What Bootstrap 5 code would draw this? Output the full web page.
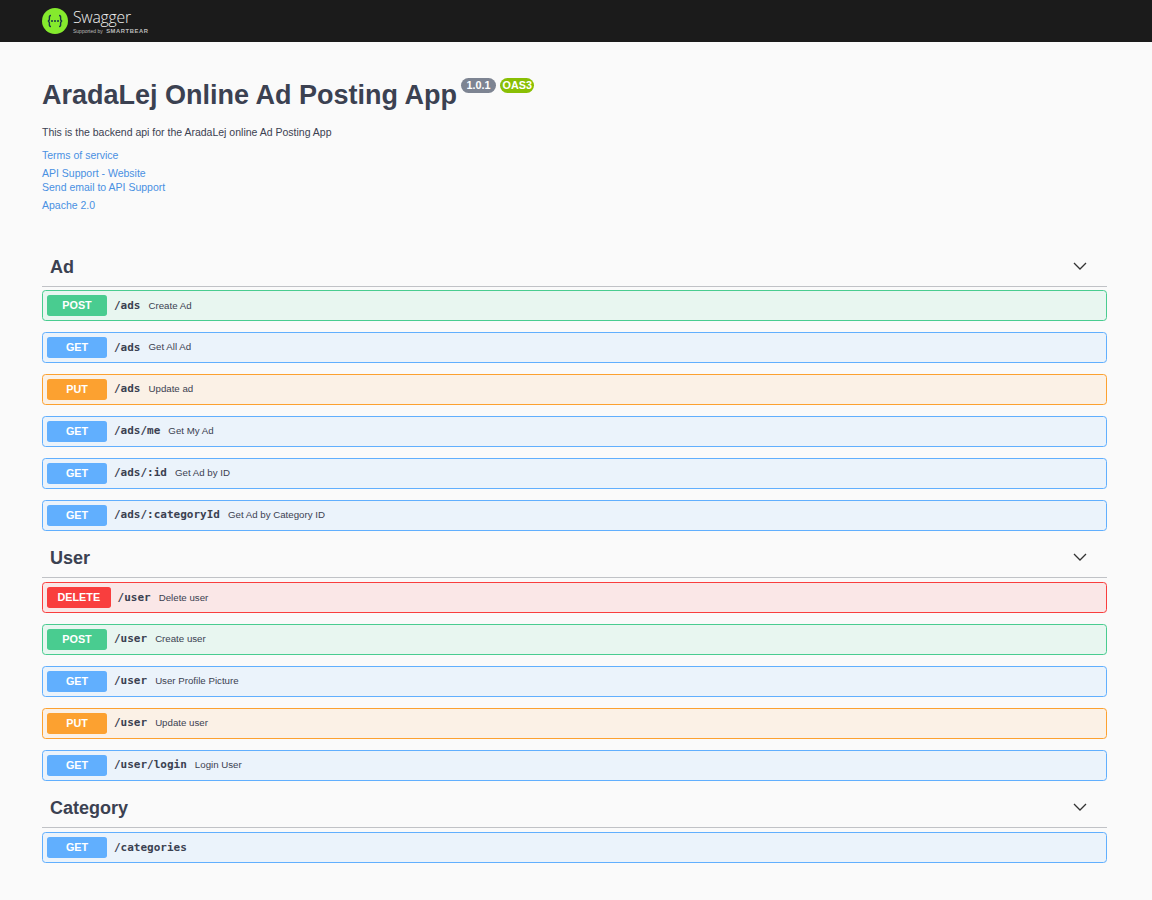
<!DOCTYPE html>
<html lang="en">
<head>
    <meta charset="UTF-8">
    <meta name="viewport" content="width=device-width, initial-scale=1.0">
    <title>Swagger UI</title>
    <link href="https://cdn.jsdelivr.net/npm/bootstrap@5.3.0/dist/css/bootstrap.min.css" rel="stylesheet">
    <style>
        body { background: #fafafa; font-family: "Liberation Sans", Arial, sans-serif; color: #3b4151; }
        .top-strip { background: #1b1b1b; height: 42px; padding: 0 42px; }
        .brand-wrap { margin-left: 5px; }
        .brand-name { font-family: "Open Sans", sans-serif; font-size: 15.7px; font-weight: 300; line-height: 18px; margin-bottom: 2px; color: #f0f0f0; letter-spacing: -.2px; }
        .brand-sub { font-size: 5px; line-height: 7px; color: #bbb; white-space: nowrap; }
        .brand-sub b { font-size: 5.8px; letter-spacing: .6px; margin-left: 2px; }
        .page-wrap { padding: 0 45px 0 42px; }
        .api-info { padding-top: 37px; height: 203.9px; }
        .api-title { font-size: 27px; line-height: 33px; font-weight: 700; margin: 0; }
        .ver-badge { font-size: 10.8px; line-height: 13px; font-weight: 700; padding: 1px 5.5px; border-radius: 8px; color: #fff; margin-top: -1px; }
        .ver-grey { background: #7d8492; }
        .ver-green { background: #89bf04; padding: 1px 2.5px; }
        .api-desc { font-size: 10.5px; line-height: 14px; margin: 0; padding-top: 13px; color: #3b4151; }
        .api-links { font-size: 10.5px; line-height: 14px; padding-top: 1px; }
        .api-links a { color: #4990e2; text-decoration: none; display: block; }
        .tag-head { height: 41px; border-bottom: 1px solid rgba(59, 65, 81, .3); padding: 0 20px 0 8px; margin-bottom: 4.5px; }
        .tag-head h3 { font-size: 18px; line-height: 22px; font-weight: 700; margin: 2px 0 0; color: #3b4151; }
        .api-info + .op-group .tag-head { margin-bottom: 3.5px; }
        .op-row { height: 31.05px; border: 1px solid; border-radius: 3.6px; padding: 0 4px; }
        .op-row + .op-row { margin-top: 10.8px; }
        .op-method { min-width: 60px; height: 21px; padding: 0 10.5px; font-size: 10.8px; line-height: 21px; font-weight: 700; color: #fff; border-radius: 2.7px; text-align: center; }
        .op-path { font-family: "DejaVu Sans Mono", monospace; font-size: 11px; font-weight: 700; padding-left: 7px; padding-right: 8px; color: #3b4151; }
        .op-summary { font-size: 9.7px; color: #3b4151; }
        .op-post { background: #e8f6f0; border-color: #49cc90; }
        .op-post .op-method { background: #49cc90; }
        .op-get { background: #ebf3fb; border-color: #61affe; }
        .op-get .op-method { background: #61affe; }
        .op-put { background: #fbf1e6; border-color: #fca130; }
        .op-put .op-method { background: #fca130; }
        .op-delete { background: #fae7e7; border-color: #f93e3e; }
        .op-delete .op-method { background: #f93e3e; }
        .op-group { margin-bottom: 6.1px; }
    </style>
</head>
<body>
    <div class="top-strip d-flex align-items-center">
        <svg width="26" height="26" viewBox="0 0 26 26">
            <circle cx="13" cy="13" r="13" fill="#85ea2d"/>
            <path d="M9 7.5c-2 0-1.6 1.6-1.6 3.2 0 1.4-.6 2.3-1.6 2.3 1 0 1.6.9 1.6 2.3 0 1.6-.4 3.2 1.6 3.2M17 7.5c2 0 1.6 1.6 1.6 3.2 0 1.4.6 2.3 1.6 2.3-1 0-1.6.9-1.6 2.3 0 1.6.4 3.2-1.6 3.2" fill="none" stroke="#173647" stroke-width="1.4"/>
            <circle cx="10" cy="13" r="1" fill="#173647"/><circle cx="13" cy="13" r="1" fill="#173647"/><circle cx="16" cy="13" r="1" fill="#173647"/>
        </svg>
        <div class="brand-wrap">
            <div class="brand-name">Swagger</div>
            <div class="brand-sub">Supported by <b>SMARTBEAR</b></div>
        </div>
    </div>
    <div class="page-wrap">
        <div class="api-info">
            <div class="d-flex align-items-start gap-1">
                <h2 class="api-title">AradaLej Online Ad Posting App</h2>
                <span class="ver-badge ver-grey">1.0.1</span>
                <span class="ver-badge ver-green">OAS3</span>
            </div>
            <p class="api-desc">This is the backend api for the AradaLej online Ad Posting App</p>
            <div class="api-links">
                <a href="#" class="mt-2">Terms of service</a>
                <a href="#" class="mt-1">API Support - Website</a>
                <a href="#">Send email to API Support</a>
                <a href="#" class="mt-1">Apache 2.0</a>
            </div>
        </div>

        <div class="op-group">
            <div class="tag-head d-flex justify-content-between align-items-center">
                <h3>Ad</h3>
                <svg width="14" height="8" viewBox="0 0 14 8"><path d="M1 1l6 6 6-6" fill="none" stroke="#333" stroke-width="1.3"/></svg>
            </div>
            <div class="op-row op-post d-flex align-items-center"><span class="op-method">POST</span><span class="op-path">/ads</span><span class="op-summary">Create Ad</span></div>
            <div class="op-row op-get d-flex align-items-center"><span class="op-method">GET</span><span class="op-path">/ads</span><span class="op-summary">Get All Ad</span></div>
            <div class="op-row op-put d-flex align-items-center"><span class="op-method">PUT</span><span class="op-path">/ads</span><span class="op-summary">Update ad</span></div>
            <div class="op-row op-get d-flex align-items-center"><span class="op-method">GET</span><span class="op-path">/ads/me</span><span class="op-summary">Get My Ad</span></div>
            <div class="op-row op-get d-flex align-items-center"><span class="op-method">GET</span><span class="op-path">/ads/:id</span><span class="op-summary">Get Ad by ID</span></div>
            <div class="op-row op-get d-flex align-items-center"><span class="op-method">GET</span><span class="op-path">/ads/:categoryId</span><span class="op-summary">Get Ad by Category ID</span></div>
        </div>

        <div class="op-group">
            <div class="tag-head d-flex justify-content-between align-items-center">
                <h3>User</h3>
                <svg width="14" height="8" viewBox="0 0 14 8"><path d="M1 1l6 6 6-6" fill="none" stroke="#333" stroke-width="1.3"/></svg>
            </div>
            <div class="op-row op-delete d-flex align-items-center"><span class="op-method">DELETE</span><span class="op-path">/user</span><span class="op-summary">Delete user</span></div>
            <div class="op-row op-post d-flex align-items-center"><span class="op-method">POST</span><span class="op-path">/user</span><span class="op-summary">Create user</span></div>
            <div class="op-row op-get d-flex align-items-center"><span class="op-method">GET</span><span class="op-path">/user</span><span class="op-summary">User Profile Picture</span></div>
            <div class="op-row op-put d-flex align-items-center"><span class="op-method">PUT</span><span class="op-path">/user</span><span class="op-summary">Update user</span></div>
            <div class="op-row op-get d-flex align-items-center"><span class="op-method">GET</span><span class="op-path">/user/login</span><span class="op-summary">Login User</span></div>
        </div>

        <div class="op-group">
            <div class="tag-head d-flex justify-content-between align-items-center">
                <h3>Category</h3>
                <svg width="14" height="8" viewBox="0 0 14 8"><path d="M1 1l6 6 6-6" fill="none" stroke="#333" stroke-width="1.3"/></svg>
            </div>
            <div class="op-row op-get d-flex align-items-center"><span class="op-method">GET</span><span class="op-path">/categories</span></div>
        </div>
    </div>
    <script src="https://cdn.jsdelivr.net/npm/bootstrap@5.3.0/dist/js/bootstrap.bundle.min.js"></script>
</body>
</html>
